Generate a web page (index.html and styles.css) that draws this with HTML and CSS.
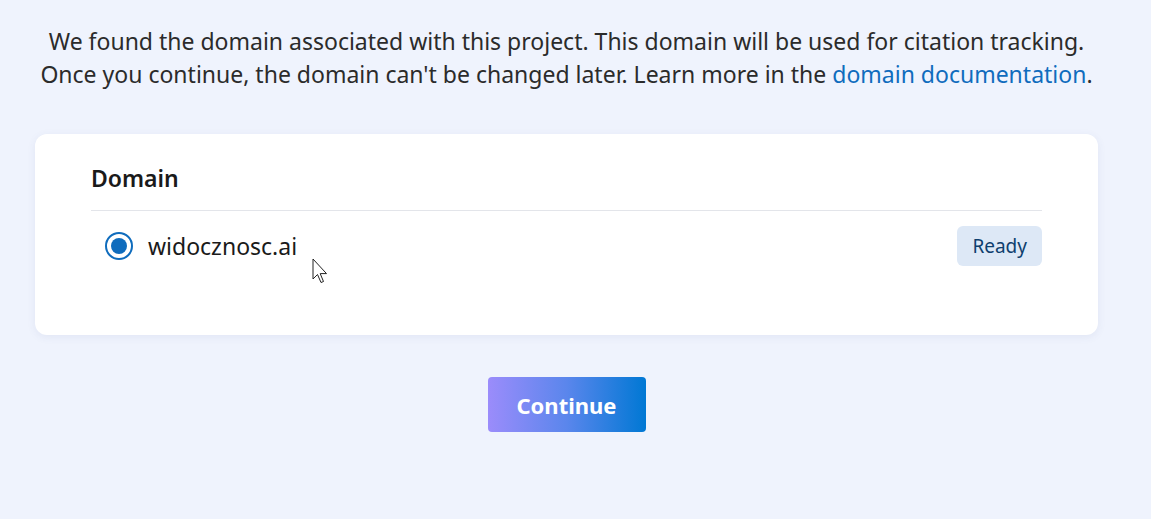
FILE: index.html
```html
<!DOCTYPE html>
<html lang="en">
<head>
    <meta charset="UTF-8">
    <meta name="viewport" content="width=device-width, initial-scale=1.0">
    <title>Domain</title>
    <link rel="stylesheet" href="styles.css">
</head>
<body>
    <div class="page">
        <p class="intro">
            We found the domain associated with this project. This domain will be used for citation tracking.<br>
            Once you continue, the domain can't be changed later. Learn more in the <a href="#">domain documentation</a>.
        </p>

        <div class="card">
            <h2 class="card-title">Domain</h2>
            <div class="domain-row">
                <label class="domain-option">
                    <span class="radio"><span class="radio-dot"></span></span>
                    <span class="domain-name">widocznosc.ai</span>
                </label>
                <span class="badge">Ready</span>
            </div>
        </div>

        <div class="actions">
            <button class="continue">Continue</button>
        </div>
    </div>

    <!-- mouse pointer -->
    <svg class="cursor" width="20" height="30" viewBox="0 0 20 30">
        <path d="M1 1 L1 21 L5.5 16.5 L9 24.5 L11.5 23.5 L8.2 15.6 L14.5 15.6 Z" fill="#fff" stroke="#222" stroke-width="1" stroke-linejoin="round"/>
    </svg>
</body>
</html>
```

FILE: styles.css
```css
body {
    margin: 0;
    background: #eff3fd;
    font-family: "Noto Sans", "Open Sans", sans-serif;
    color: #242424;
}
.page {
    width: 1133px;
    padding-top: 25px;
}
.intro {
    margin: 0;
    text-align: center;
    font-size: 23px;
    line-height: 33px;
    color: #2b2b2b;
}
.intro a {
    color: #0f6cbd;
    text-decoration: none;
}
.card {
    margin: 43px 35px 0 35px;
    background: #fff;
    border-radius: 12px;
    box-shadow: 0 2px 8px rgba(60, 80, 140, 0.08);
    padding: 29px 56px 69px 56px;
}
.card-title {
    margin: 0;
    font-size: 23px;
    font-weight: 600;
    line-height: 30px;
    color: #1a1a1a;
    padding-bottom: 17px;
    border-bottom: 1px solid #e3e5ea;
}
.domain-row {
    display: flex;
    align-items: center;
    justify-content: space-between;
    padding-top: 15px;
}
.domain-option {
    display: flex;
    align-items: center;
    gap: 15px;
    padding-left: 14px;
}
.radio {
    width: 24px;
    height: 24px;
    border: 2px solid #0f6cbd;
    border-radius: 50%;
    display: flex;
    align-items: center;
    justify-content: center;
}
.radio-dot {
    width: 16px;
    height: 16px;
    border-radius: 50%;
    background: #0f6cbd;
}
.domain-name {
    font-size: 23px;
    color: #1a1a1a;
}
.badge {
    background: #dde8f6;
    color: #0e3f6e;
    font-size: 19px;
    line-height: 40px;
    padding: 0 15px;
    border-radius: 6px;
}
.actions {
    display: flex;
    justify-content: center;
    margin-top: 42px;
}
.continue {
    width: 158px;
    height: 55px;
    border: none;
    border-radius: 4px;
    background: linear-gradient(90deg, #9b8cfb 0%, #5a86ec 50%, #0078d4 100%);
    color: #fff;
    font-family: "Noto Sans", "Open Sans", sans-serif;
    font-size: 22px;
    font-weight: 700;
    cursor: pointer;
}
.cursor {
    position: absolute;
    left: 312px;
    top: 258px;
}
```
